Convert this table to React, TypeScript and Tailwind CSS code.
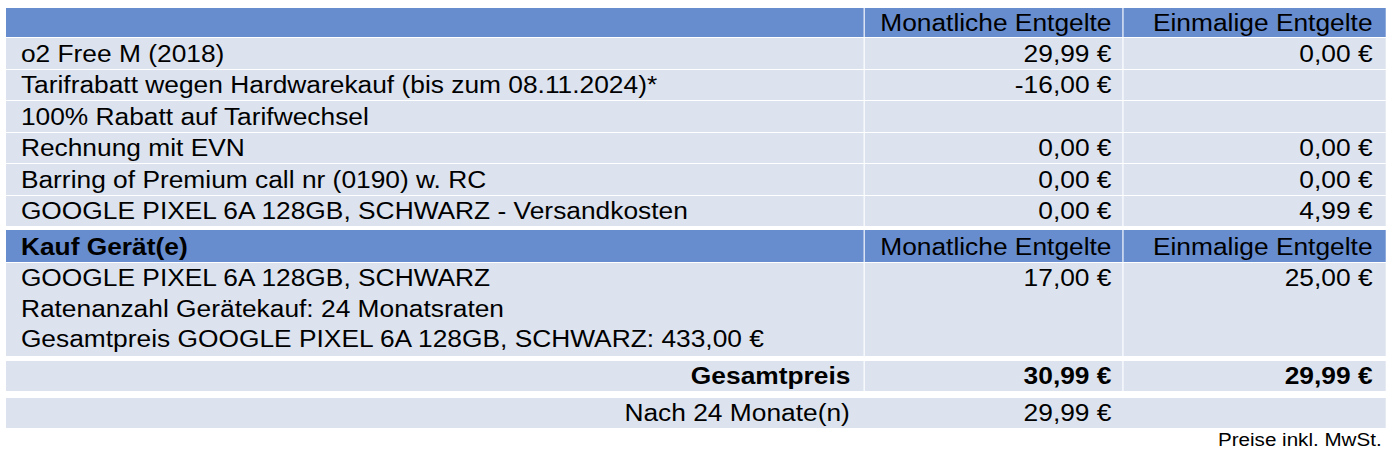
import clsx from "clsx";

const BLUE = "bg-[#678dcf]";
const LIGHT = "bg-[#dce3ef]";

const TARIF_ROWS = [
  ["o2 Free M (2018)", "29,99 €", "0,00 €"],
  ["Tarifrabatt wegen Hardwarekauf (bis zum 08.11.2024)*", "-16,00 €", ""],
  ["100% Rabatt auf Tarifwechsel", "", ""],
  ["Rechnung mit EVN", "0,00 €", "0,00 €"],
  ["Barring of Premium call nr (0190) w. RC", "0,00 €", "0,00 €"],
  ["GOOGLE PIXEL 6A 128GB, SCHWARZ - Versandkosten", "0,00 €", "4,99 €"],
];

const DEVICE_LINES = [
  "GOOGLE PIXEL 6A 128GB, SCHWARZ",
  "Ratenanzahl Gerätekauf: 24 Monatsraten",
  "Gesamtpreis GOOGLE PIXEL 6A 128GB, SCHWARZ: 433,00 €",
];

const GRID = "grid grid-cols-[749px_225px_229px] gap-x-px";

function HeaderRow({ title, tall }: { title?: string; tall?: boolean }) {
  return (
    <div className={clsx(GRID, tall ? "h-[32px]" : "h-[29px]")}>
      <div className={clsx(BLUE, "flex items-center pl-[13px] pt-[2px] font-bold whitespace-nowrap")}>{title}</div>
      <div className={clsx(BLUE, "flex items-center justify-end pr-[9.5px] pt-[2px] whitespace-nowrap")}>
        Monatliche Entgelte
      </div>
      <div className={clsx(BLUE, "flex items-center justify-end pr-[11.5px] pt-[2px] whitespace-nowrap")}>
        Einmalige Entgelte
      </div>
    </div>
  );
}

export default function App() {
  return (
    <div className="min-h-screen bg-white">
      <div className="ml-[6px] w-[1205px] origin-top-left scale-x-[1.145] pt-2 font-['Liberation_Sans',Arial,sans-serif] text-[23px] leading-none text-black">
        <HeaderRow />

        <div className="mt-px flex flex-col gap-y-px">
          {TARIF_ROWS.map(([label, monthly, once]) => (
            <div key={label} className={clsx(GRID, "h-[30.5px]")}>
              <div className={clsx(LIGHT, "flex items-center pl-[13px] pt-[2px] whitespace-nowrap")}>{label}</div>
              <div className={clsx(LIGHT, "flex items-center justify-end pr-[9.5px] pt-[2px]")}>{monthly}</div>
              <div className={clsx(LIGHT, "flex items-center justify-end pr-[11.5px] pt-[2px]")}>{once}</div>
            </div>
          ))}
        </div>

        <div className="mt-[4px]">
          <HeaderRow title="Kauf Gerät(e)" tall />
        </div>

        <div className={clsx(GRID, "mt-px h-[93px] leading-[30.5px]")}>
          <div className={clsx(LIGHT, "pl-[13px] whitespace-nowrap")}>
            {DEVICE_LINES.map((line) => (
              <div key={line}>{line}</div>
            ))}
          </div>
          <div className={clsx(LIGHT, "pr-[9.5px] text-right")}>17,00 €</div>
          <div className={clsx(LIGHT, "pr-[11.5px] text-right")}>25,00 €</div>
        </div>

        <div className={clsx(GRID, "mt-[5px] h-[30px] font-bold")}>
          <div className={clsx(LIGHT, "flex items-center justify-end pr-[11.5px] pt-px")}>Gesamtpreis</div>
          <div className={clsx(LIGHT, "flex items-center justify-end pr-[9.5px] pt-px")}>30,99 €</div>
          <div className={clsx(LIGHT, "flex items-center justify-end pr-[11.5px] pt-px")}>29,99 €</div>
        </div>

        <div className={clsx(GRID, LIGHT, "mt-[7px] h-[30px]")}>
          <div className="flex items-center justify-end pr-[12px] pt-px">Nach 24 Monate(n)</div>
          <div className="flex items-center justify-end pr-[9.5px] pt-px">29,99 €</div>
          <div />
        </div>

        <div className="flex h-[23px] items-center justify-end pr-[3.5px] text-[18px]">Preise inkl. MwSt.</div>
      </div>
    </div>
  );
}
